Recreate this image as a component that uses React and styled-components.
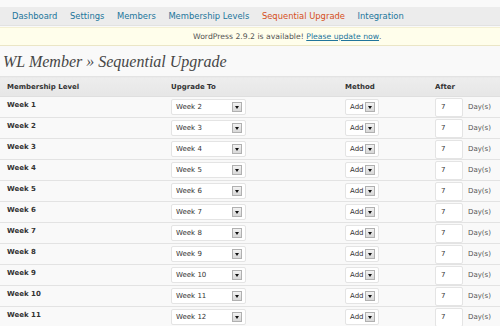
import React from 'react'
import styled, { createGlobalStyle } from 'styled-components'

const GlobalStyle = createGlobalStyle`
  html, body {
    margin: 0;
    padding: 0;
    background: #f9f9f9;
  }
  body {
    font-family: "DejaVu Sans", Verdana, sans-serif;
    color: #333;
    width: 500px;
    height: 326px;
    overflow: hidden;
  }
`

const Page = styled.div`
  padding-top: 7px;
`

const Nav = styled.ul`
  display: flex;
  margin: 0;
  padding: 0 0 0 12px;
  list-style: none;
  height: 18px;
  align-items: center;
  background: #ececec;
  border-bottom: 1px solid #e2e2e2;
`

const NavItem = styled.li`
  font-size: 8.4px;
  margin-right: 12.6px;
  color: ${p => (p.$active ? '#d54e21' : '#21759b')};
  white-space: nowrap;
`

const Notice = styled.div`
  margin-top: 1px;
  height: 17px;
  display: flex;
  align-items: center;
  padding-left: 193px;
  font-size: 7.7px;
  color: #555;
  background: #fffeeb;
  border-top: 1px solid #f4f0d4;
  border-bottom: 1px solid #ebe6c6;

  a {
    color: #21759b;
    text-decoration: underline;
  }
`

const Title = styled.h2`
  margin: 0;
  padding: 6px 0 0 3px;
  height: 20px;
  font-family: "Liberation Serif", Georgia, serif;
  font-style: italic;
  font-weight: normal;
  font-size: 16px;
  line-height: 20px;
  color: #464646;
`

const Table = styled.table`
  margin-top: 4px;
  width: 500px;
  border-collapse: collapse;
  table-layout: fixed;
  border-top: 1px solid #e3e3e3;
`

const HeadCell = styled.th`
  height: 19px;
  padding: 0 0 0 ${p => p.$pad || 0}px;
  text-align: left;
  font-size: 7px;
  font-weight: bold;
  color: #333;
  background: linear-gradient(#ededed, #e6e6e6);
  border-bottom: 1px solid #dfdfdf;
`

const Row = styled.tr`
  background: #f9f9f9;
`

const Cell = styled.td`
  height: 20px;
  padding: 0 0 0 ${p => p.$pad || 0}px;
  vertical-align: middle;
  border-top: 1px solid #fff;
  border-bottom: 1px solid #e3e3e3;
  font-size: 7px;
`

const Level = styled.span`
  display: block;
  font-weight: bold;
  color: #333;
  margin-top: -5px;
`

const Select = styled.div`
  display: inline-flex;
  align-items: center;
  justify-content: space-between;
  box-sizing: border-box;
  width: ${p => p.$w}px;
  height: 16px;
  padding: 0 3px 0 4px;
  background: #fff;
  border: 1px solid #e4e4e4;
  border-radius: 2px;
  font-size: 7px;
  color: #333;
`

const ArrowBox = styled.span`
  display: inline-flex;
  align-items: center;
  justify-content: center;
  box-sizing: border-box;
  width: 10px;
  height: 10px;
  background: linear-gradient(#f2f2f2, #d8d8d8);
  border: 1px solid #b0b0b0;

  &::after {
    content: '';
    border-left: 2.5px solid transparent;
    border-right: 2.5px solid transparent;
    border-top: 3px solid #111;
  }
`

const AfterWrap = styled.div`
  display: flex;
  align-items: center;
  gap: 5px;
`

const DaysInput = styled.div`
  box-sizing: border-box;
  width: 28px;
  height: 19px;
  padding-left: 5px;
  display: flex;
  align-items: center;
  background: #fff;
  border: 1px solid #e4e4e4;
  border-radius: 2px;
  font-size: 7px;
  color: #333;
`

const Days = styled.span`
  color: #555;
  font-size: 7px;
`

const navItems = [
  'Dashboard',
  'Settings',
  'Members',
  'Membership Levels',
  'Sequential Upgrade',
  'Integration'
]

const weeks = Array.from({ length: 11 }, (_, i) => i + 1)

const App = () => (
  <Page>
    <GlobalStyle />
    <Nav>
      {navItems.map(item => (
        <NavItem key={item} $active={item === 'Sequential Upgrade'}>
          {item}
        </NavItem>
      ))}
    </Nav>
    <Notice>
      WordPress 2.9.2 is available!&nbsp;<a href="#">Please update now</a>.
    </Notice>
    <Title>WL Member » Sequential Upgrade</Title>
    <Table>
      <colgroup>
        <col style={{ width: 171 }} />
        <col style={{ width: 174 }} />
        <col style={{ width: 90 }} />
        <col />
      </colgroup>
      <thead>
        <tr>
          <HeadCell $pad={7}>Membership Level</HeadCell>
          <HeadCell>Upgrade To</HeadCell>
          <HeadCell>Method</HeadCell>
          <HeadCell>After</HeadCell>
        </tr>
      </thead>
      <tbody>
        {weeks.map(n => (
          <Row key={n}>
            <Cell $pad={7}>
              <Level>Week {n}</Level>
            </Cell>
            <Cell>
              <Select $w={75}>
                <span>Week {n + 1}</span>
                <ArrowBox />
              </Select>
            </Cell>
            <Cell>
              <Select $w={34}>
                <span>Add</span>
                <ArrowBox />
              </Select>
            </Cell>
            <Cell>
              <AfterWrap>
                <DaysInput>7</DaysInput>
                <Days>Day(s)</Days>
              </AfterWrap>
            </Cell>
          </Row>
        ))}
      </tbody>
    </Table>
  </Page>
)

export default App
